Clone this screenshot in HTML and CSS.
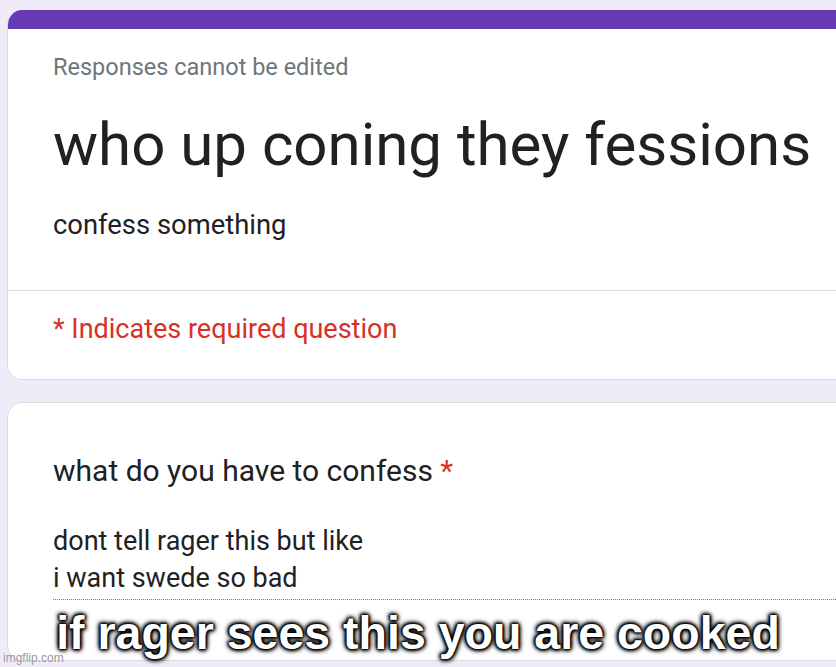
FILE: index.html
```html
<!DOCTYPE html>
<html>
<head>
<meta charset="utf-8">
<link rel="stylesheet" href="styles.css">
</head>
<body>
<div class="page">
  <div class="card header-card">
    <div class="band"></div>
    <div class="header-main">
      <div class="notice">Responses cannot be edited</div>
      <h1 class="title">who up coning they fessions</h1>
      <div class="desc">confess something</div>
    </div>
    <div class="header-foot">
      <div class="required">* Indicates required question</div>
    </div>
  </div>
  <div class="card question-card">
    <div class="question">what do you have to confess <span class="star">*</span></div>
    <div class="answer">
      <div>dont tell rager this but like</div>
      <div>i want swede so bad</div>
    </div>
  </div>
</div>
<div class="caption">if rager sees this you are cooked</div>
<div class="watermark">imgflip.com</div>
</body>
</html>
```
FILE: styles.css
```css
html, body {
  margin: 0;
  padding: 0;
}
body {
  width: 836px;
  height: 667px;
  overflow: hidden;
  background: #f0ebf8;
  font-family: Roboto, "Liberation Sans", Arial, sans-serif;
  color: #202124;
  position: relative;
}
.page {
  padding: 10px 0 0 7px;
  display: flex;
  flex-direction: column;
  gap: 22px;
}
.card {
  width: 900px;
  background: #fff;
  border: 1px solid #dadce0;
  border-radius: 15px;
  box-sizing: border-box;
  overflow: hidden;
}
.header-card {
  border-top: none;
}
.band {
  height: 19px;
  background: #673ab7;
}
.header-main {
  padding: 23px 0 49px 45px;
  border-bottom: 1px solid #dadce0;
}
.notice {
  font-size: 23.5px;
  line-height: 30px;
  color: #70757a;
}
.title {
  margin: 27px 0 0 0;
  font-weight: 400;
  font-size: 60px;
  line-height: 72px;
}
.desc {
  margin-top: 28px;
  font-size: 27.4px;
  line-height: 32px;
}
.header-foot {
  padding: 22px 0 34px 45px;
}
.required {
  font-size: 27px;
  line-height: 32px;
  color: #d93025;
}
.question-card {
  padding: 50px 0 60px 45px;
}
.question {
  font-size: 30px;
  line-height: 36px;
}
.star {
  color: #d93025;
}
.answer {
  margin-top: 34px;
  font-size: 27px;
  line-height: 37px;
  border-bottom: 1px dotted #70757a;
  padding-bottom: 2px;
}
.caption {
  position: absolute;
  left: 0;
  right: 0;
  top: 610px;
  text-align: center;
  font-family: "Liberation Sans", Arial, sans-serif;
  font-weight: 700;
  font-size: 46.5px;
  line-height: 46px;
  color: #fff;
  text-shadow: 0 0 2px #000, 0 0 2px #000, 0 0 3px #000, 0 0 4px #000, 1px 1px 5px #000, -1px -1px 5px #000, 0 0 6px rgba(0,0,0,0.6);
}
.watermark {
  position: absolute;
  left: 3px;
  bottom: 2px;
  font-family: "Liberation Sans", Arial, sans-serif;
  font-size: 12px;
  color: #9a9a9a;
}
```
